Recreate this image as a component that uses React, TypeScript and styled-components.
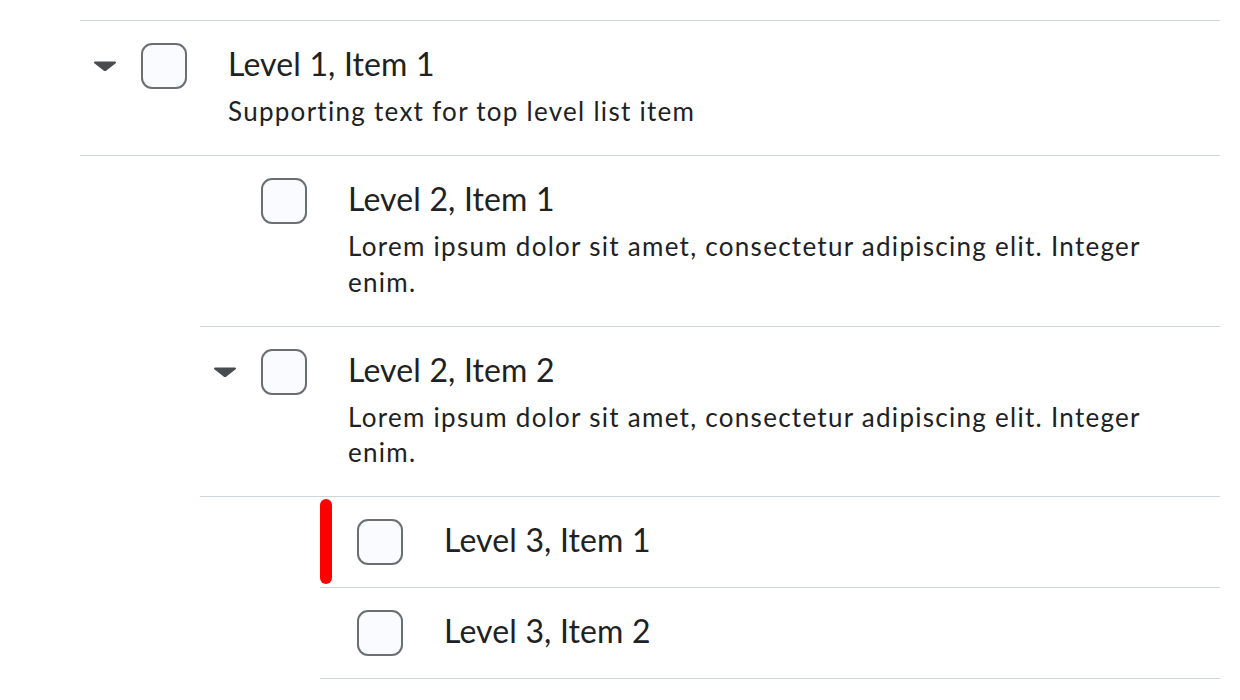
import * as React from 'react';
import styled, {createGlobalStyle} from 'styled-components';

interface Item {
    id: string;
    title: string;
    text?: string;
    selected?: boolean;
    children?: Item[];
}

const LOREM = 'Lorem ipsum dolor sit amet, consectetur adipiscing elit. Integer enim.';

const items: Item[] = [
    {
        id: 'l1-1',
        title: 'Level 1, Item 1',
        text: 'Supporting text for top level list item',
        children: [
            {id: 'l2-1', title: 'Level 2, Item 1', text: LOREM},
            {
                id: 'l2-2',
                title: 'Level 2, Item 2',
                text: LOREM,
                children: [
                    {id: 'l3-1', title: 'Level 3, Item 1', selected: true},
                    {id: 'l3-2', title: 'Level 3, Item 2'},
                ],
            },
        ],
    },
];

const GlobalStyle = createGlobalStyle`
    body {
        margin: 0;
        background: #ffffff;
        font-family: Lato, "Noto Sans", sans-serif;
        color: #202122;
    }
`;

const Page = styled.div`
    padding: 20px 20px 0 80px;
`;

const List = styled.ul<{$root?: boolean}>`
    list-style: none;
    margin: 0;
    padding: 0;
    border-top: ${(p) => (p.$root ? '1px solid #cdd5dc' : 'none')};
`;

const Nested = styled.div`
    padding-left: 120px;
`;

const Row = styled.div`
    position: relative;
    display: flex;
    align-items: flex-start;
    padding: 22px 40px 22px 13px;
    border-bottom: 1px solid #cdd5dc;
`;

const Expander = styled.button`
    flex: none;
    width: 24px;
    height: 46px;
    margin-right: 24px;
    padding: 0;
    border: none;
    background: none;
    display: flex;
    align-items: center;
    justify-content: center;
    cursor: pointer;
`;

const Spacer = styled.div<{$slot: boolean}>`
    flex: none;
    width: ${(p) => (p.$slot ? '24px' : '0')};
    margin-right: 24px;
`;

const Checkbox = styled.span`
    flex: none;
    box-sizing: border-box;
    width: 46px;
    height: 46px;
    border: 2px solid #6b6f72;
    border-radius: 11px;
    background: #f9fbff;
`;

const Content = styled.div`
    flex: 1;
    margin-left: 41px;
    min-width: 0;
`;

const Title = styled.div`
    font-size: 32px;
    line-height: 42px;
    letter-spacing: 0.15px;
`;

const Support = styled.div`
    font-size: 26px;
    line-height: 35.5px;
    letter-spacing: 1.28px;
    margin: 9px 0 3.5px;
`;

const Indicator = styled.span`
    position: absolute;
    left: 0;
    top: 2px;
    bottom: 3px;
    width: 12px;
    border-radius: 6px;
    background: #ff0000;
`;

const Caret = () => (
    <svg width="24" height="10" viewBox="0 0 24 10">
        <path d="M2 0.5h20a1 1 0 0 1 .7 1.7l-9.3 7.3a2 2 0 0 1-2.8 0L1.3 2.2A1 1 0 0 1 2 0.5z" fill="#494c4e" />
    </svg>
);

const ListItem: React.FC<{item: Item; hasExpandColumn: boolean}> = ({item, hasExpandColumn}) => {
    const childCol = !!item.children && item.children.some((c) => c.children && c.children.length > 0);
    return (
        <li>
            <Row>
                {item.selected && <Indicator />}
                {item.children ? (
                    <Expander aria-label="collapse">
                        <Caret />
                    </Expander>
                ) : (
                    <Spacer $slot={hasExpandColumn} />
                )}
                <Checkbox role="checkbox" aria-checked="false" />
                <Content>
                    <Title>{item.title}</Title>
                    {item.text && <Support>{item.text}</Support>}
                </Content>
            </Row>
            {item.children && (
                <Nested>
                    <List>
                        {item.children.map((c) => (
                            <ListItem key={c.id} item={c} hasExpandColumn={childCol} />
                        ))}
                    </List>
                </Nested>
            )}
        </li>
    );
};

const App: React.FC = () => (
    <Page>
        <GlobalStyle />
        <List $root>
            {items.map((i) => (
                <ListItem key={i.id} item={i} hasExpandColumn={true} />
            ))}
        </List>
    </Page>
);

export default App;
